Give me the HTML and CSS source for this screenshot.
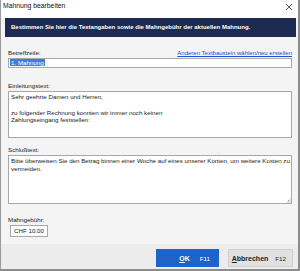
FILE: index.html
```html
<html>
<head>
<link rel="stylesheet" href="styles.css">
</head>
<body>
    <div class="window">
        <div class="titlebar">
            <span class="title">Mahnung bearbeiten</span>
            <svg class="close" width="8" height="8" viewBox="0 0 8 8">
                <path d="M1 1 L7 7 M7 1 L1 7" stroke="#333" stroke-width="0.8" fill="none"/>
            </svg>
        </div>
        <div class="banner">Bestimmen Sie hier die Textangaben sowie die Mahngebühr der aktuellen Mahnung.</div>
        <div class="content">
            <div class="row row-first">
                <span class="label">Betreffzeile:</span>
                <span class="link">Anderen Textbaustein wählen/neu erstellen</span>
            </div>
            <div class="field field-line"><span class="selected">1. Mahnung</span></div>

            <div class="row row-gap">
                <span class="label">Einleitungstext:</span>
            </div>
            <div class="field field-intro">
                <div class="line">Sehr geehrte Damen und Herren,</div>
                <div class="line">&nbsp;</div>
                <div class="line">zu folgender Rechnung konnten wir immer noch keinen</div>
                <div class="line">Zahlungseingang feststellen:</div>
            </div>

            <div class="row row-small">
                <span class="label">Schlußtext:</span>
            </div>
            <div class="field field-closing">
                <div class="line">Bitte überweisen Sie den Betrag binnen einer Woche auf eines unserer Konten, um weitere Kosten zu</div>
                <div class="line">vermeiden.</div>
                <svg class="grip" width="5" height="5" viewBox="0 0 5 5">
                    <rect x="3.5" y="0.5" width="1" height="1" fill="#aaa"/>
                    <rect x="2" y="2" width="1" height="1" fill="#aaa"/>
                    <rect x="3.5" y="2" width="1" height="1" fill="#aaa"/>
                    <rect x="0.5" y="3.5" width="1" height="1" fill="#aaa"/>
                    <rect x="2" y="3.5" width="1" height="1" fill="#aaa"/>
                    <rect x="3.5" y="3.5" width="1" height="1" fill="#aaa"/>
                </svg>
            </div>

            <div class="row row-gap2">
                <span class="label">Mahngebühr:</span>
            </div>
            <div class="field field-fee">CHF 10.00</div>
        </div>
        <div class="footer">
            <div class="button button-primary">
                <span class="caption"><u>O</u>K</span>
                <span class="key">F11</span>
            </div>
            <div class="button">
                <span class="caption"><u>A</u>bbrechen</span>
                <span class="key">F12</span>
            </div>
        </div>
    </div>
</body>
</html>
```

FILE: styles.css
```css
    * {
        box-sizing: border-box;
    }

    body {
        margin: 0;
        background: #fff;
        font-family: "Liberation Sans", Arial, sans-serif;
    }

    .window {
        width: 300px;
        height: 271px;
        background: #f4f4f4;
        border-left: 1px solid #9a9a9a;
        border-right: 2px solid #8c8c8c;
        border-bottom: 2px solid #8c8c8c;
        display: flex;
        flex-direction: column;
    }

    .titlebar {
        height: 18px;
        background: #fff;
        display: flex;
        justify-content: space-between;
        align-items: flex-start;
        padding: 0 5px 0 2px;
    }

    .title {
        font-size: 6.8px;
        line-height: 12px;
        color: #111;
    }

    .close {
        margin-top: 3px;
    }

    .banner {
        height: 19px;
        margin: 0 2px 0 4px;
        background: #1d2a52;
        color: #fff;
        font-size: 6px;
        font-weight: 700;
        line-height: 19px;
        padding-left: 6px;
        white-space: nowrap;
    }

    .content {
        padding: 0 6px 0 7px;
        font-size: 6.2px;
        color: #222;
    }

    .row {
        display: flex;
        justify-content: space-between;
        align-items: flex-end;
        height: 8px;
        line-height: 8px;
    }

    .row-first {
        margin-top: 12px;
    }

    .row-gap {
        margin-top: 14px;
    }

    .row-small {
        margin-top: 8px;
    }

    .row-gap2 {
        margin-top: 12px;
    }

    .link {
        color: #1a4fd6;
        text-decoration: underline;
        font-size: 6px;
    }

    .field {
        margin-top: 1px;
        background: #fff;
        border: 1px solid #a8a8a8;
        padding: 1px 2px;
        line-height: 7.8px;
        color: #222;
        white-space: nowrap;
        overflow: hidden;
    }

    .field-line {
        height: 10px;
        padding: 0 1px;
        line-height: 8px;
    }

    .selected {
        background: #3a7fe0;
        color: #fff;
        padding: 0 1px;
    }

    .field-intro {
        height: 47px;
    }

    .field-closing {
        height: 49px;
        position: relative;
    }

    .grip {
        position: absolute;
        right: 0;
        bottom: 0;
    }

    .field-fee {
        width: 38px;
        height: 12px;
        margin-left: 2px;
        text-align: right;
        line-height: 10px;
        padding: 0 3px;
    }

    .footer {
        flex: 1;
        margin-top: 7px;
        background: #ececec;
        display: flex;
        justify-content: flex-end;
        align-items: flex-start;
        gap: 9px;
        padding: 5px 5px 0 0;
    }

    .button {
        width: 65px;
        height: 18px;
        background: #e1e1e1;
        border: 1px solid #cfcfcf;
        display: flex;
        justify-content: flex-end;
        align-items: center;
        gap: 7px;
        padding-right: 6px;
        font-size: 7px;
        color: #222;
    }

    .button-primary {
        width: 63px;
        background: #1f62c9;
        border-color: #1f62c9;
        color: #fff;
        gap: 10px;
        padding-right: 8px;
    }

    .caption {
        font-weight: 600;
    }

    .key {
        font-size: 6.2px;
    }
```
